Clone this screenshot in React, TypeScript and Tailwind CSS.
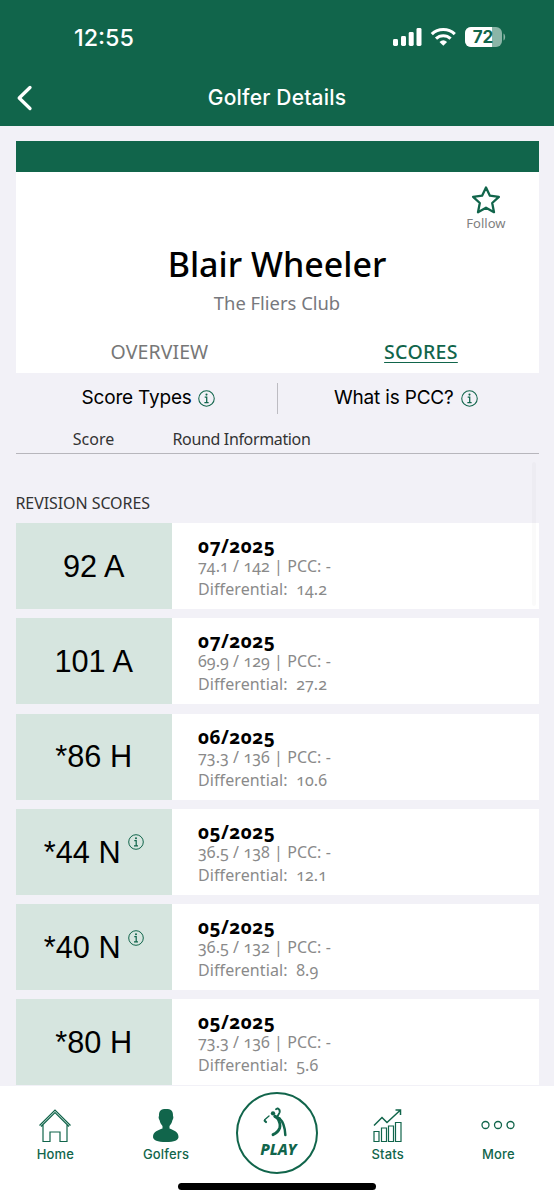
import React from "react";

const rows = [
  { score: "92 A", date: "07/2025", course: "74.1 / 142 | PCC: -", diff: "14.2", info: false },
  { score: "101 A", date: "07/2025", course: "69.9 / 129 | PCC: -", diff: "27.2", info: false },
  { score: "*86 H", date: "06/2025", course: "73.3 / 136 | PCC: -", diff: "10.6", info: false },
  { score: "*44 N", date: "05/2025", course: "36.5 / 138 | PCC: -", diff: "12.1", info: true },
  { score: "*40 N", date: "05/2025", course: "36.5 / 132 | PCC: -", diff: "8.9", info: true },
  { score: "*80 H", date: "05/2025", course: "73.3 / 136 | PCC: -", diff: "5.6", info: false },
];

function Info({ className }: { className: string }) {
  return (
    <svg viewBox="0 0 16 16" className={className} fill="none" stroke="#11654b">
      <circle cx="8" cy="8" r="7.3" strokeWidth="1" />
      <circle cx="8" cy="4.3" r="1" fill="#11654b" stroke="none" />
      <path d="M6.3 6.700h1.900v5M6 11.800h4" strokeWidth="1.200" />
    </svg>
  );
}

function StatusIcons() {
  return (
    <svg viewBox="0 0 114 22" className="mt-[26px] h-[22px] w-[114px]">
      <g fill="#fff">
        <rect x="1" y="13" width="5" height="7" rx="1.4" />
        <rect x="9" y="10" width="5" height="10" rx="1.4" />
        <rect x="16.7" y="6" width="5" height="14" rx="1.4" />
        <rect x="24.5" y="2" width="5" height="18" rx="1.4" />
        <path d="M51.3 19.8l-3.800-3.800a5.700 5.700 0 0 1 7.600 0z" />
      </g>
      <g fill="none" stroke="#fff" strokeWidth="3.1">
        <path d="M39.8 8.2a16.6 16.6 0 0 1 23 0" />
        <path d="M44 12.7a10.6 10.6 0 0 1 14.6 0" />
      </g>
      <path d="M79 1h25a6 6 0 0 1 6 6v8a6 6 0 0 1-6 6H79a6 6 0 0 1-6-6V7a6 6 0 0 1 6-6z" fill="#8bb5a7" />
      <path d="M79 1h21v20H79a6 6 0 0 1-6-6V7a6 6 0 0 1 6-6z" fill="#fff" />
      <path d="M111.5 7.5c2.2 1.2 2.2 5.8 0 7z" fill="#8bb5a7" />
      <text x="91" y="17.2" textAnchor="middle" fontFamily="Inter" fontWeight="700" fontSize="17" fill="#11654b">72</text>
    </svg>
  );
}

function NavItem({ label, children }: { label: string; children: React.ReactNode }) {
  return (
    <div className="flex w-[110.700px] flex-col items-center pt-[20px]">
      <div className="flex h-[38px] items-center justify-center">{children}</div>
      <span className="mt-[1px] font-['Inter'] text-[13px] leading-[18px] font-medium tracking-[0.15px]">{label}</span>
    </div>
  );
}

export default function App() {
  return (
    <div className="flex h-[1200px] w-[554px] flex-col overflow-hidden bg-[#f2f1f7] font-['Noto_Sans',sans-serif]">
      <header className="h-[125.500px] shrink-0 bg-[#11654b] text-white">
        <div className="flex h-[70px] items-start justify-between pr-[48px] pl-[74px]">
          <span className="mt-[22px] font-['Inter'] text-[23.300px] leading-[32px] font-medium">12:55</span>
          <StatusIcons />
        </div>
        <div className="flex h-[55px] items-center px-4">
          <svg viewBox="0 0 18 28" className="h-[28px] w-[18px]" fill="none" stroke="currentColor" strokeWidth="3.300" strokeLinecap="round" strokeLinejoin="round">
            <path d="M14 3.500L3.200 14 14 24.500" />
          </svg>
          <h1 className="mr-[18px] flex-1 text-center font-['Inter'] text-[21px] leading-[28px] font-medium tracking-[0.200px]">Golfer Details</h1>
        </div>
      </header>

      <section className="mx-[15.500px] mt-[15.500px] h-[232px] shrink-0 bg-white">
        <div className="h-[31px] bg-[#11654b]" />
        <div className="flex h-[67px] justify-end pr-[33px]">
          <div className="flex flex-col items-center pt-[13px]">
            <svg viewBox="0 0 30 30" className="h-[30px] w-[30px]" fill="none" stroke="#11654b" strokeWidth="2.300" strokeLinejoin="round">
              <path d="M15 2.500l3.900 8.200 9 1.100-6.700 6.200 1.800 9.200-8-4.500-8 4.500 1.800-9.200-6.700-6.200 9-1.100z" />
            </svg>
            <span className="text-[13px] leading-[16px] text-[#808080]">Follow</span>
          </div>
        </div>
        <h2 className="h-[50px] text-center text-[34px] leading-[50px] font-medium text-black">Blair Wheeler</h2>
        <p className="h-[28px] text-center text-[18.400px] leading-[28px] text-[#77787d]">The Fliers Club</p>
        <div className="flex pt-[23px] leading-[24px]">
          <span className="w-[289px] text-center text-[19.500px] tracking-[0.1px] text-[#777]">OVERVIEW</span>
          <span className="w-[236px] text-center text-[19.500px] font-medium tracking-[0.3px] text-[#11654b] underline underline-offset-[3px]">SCORES</span>
        </div>
      </section>

      <section className="mx-[15.500px] flex h-[51px] shrink-0 items-center font-['Inter'] text-[19px] tracking-[-0.180px] text-black">
        <div className="flex w-[261px] items-center gap-[6px] pl-[66px]">
          <span>Score Types</span><Info className="h-[17px] w-[17px]" />
        </div>
        <div className="h-[31px] w-px bg-[#bdbcc2]" />
        <div className="flex items-center gap-[7px] pl-[56.500px]">
          <span>What is PCC?</span><Info className="h-[17px] w-[17px]" />
        </div>
      </section>

      <div className="mx-[15.500px] flex h-[30px] shrink-0 items-center border-b border-[#b7b6bc] text-[16px] text-[#333]">
        <span className="w-[156px] text-center">Score</span>
        <span className="pl-[1px] tracking-[-0.350px]">Round Information</span>
      </div>

      <main className="relative min-h-0 flex-1 overflow-hidden px-[15.500px]">
        <div className="flex h-[69px] items-end pb-[8px] text-[16px] leading-[24px] tracking-[-0.080px] text-[#333]">REVISION SCORES</div>
        <div className="flex flex-col gap-[9.250px]">
          {rows.map((r, i) => (
            <article key={i} className="flex h-[86px] shrink-0 bg-white">
              <div className="flex w-[156.500px] items-center justify-center bg-[#d6e5df] pt-[2px] font-['Liberation_Sans',sans-serif] text-[30.700px] text-black">
                <span>{r.score}</span>
                {r.info && <Info className="mb-[21px] ml-[7px] h-[16px] w-[16px]" />}
              </div>
              <div className="pt-[13px] pl-[26px] text-[#8a8a8a] oldstyle-nums">
                <div className="text-[19px] leading-[20px] font-bold tracking-[0.400px] text-black">{r.date}</div>
                <div className="mt-[1px] text-[16px] leading-[19px] tracking-[0.080px]">{r.course}</div>
                <div className="mt-[3px] text-[16px] leading-[21px] tracking-[0.100px] whitespace-pre">{"Differential:  " + r.diff}</div>
              </div>
            </article>
          ))}
        </div>
        <div className="absolute top-[8px] right-[18px] h-[144px] w-[4px] rounded-full bg-black/[0.02]" />
      </main>

      <nav className="relative flex h-[114px] shrink-0 bg-white text-[#11654b]">
        <NavItem label="Home">
          <svg viewBox="0 0 34 36" className="h-[36px] w-[34px]" fill="none" stroke="currentColor" strokeWidth="1.200">
            <path d="M1.500 18.500L17 3l15.500 15.500M3 19.500L17 5.500l14 14M5 18v16.500h7V25h10v9.500h7V18" />
          </svg>
        </NavItem>
        <NavItem label="Golfers">
          <svg viewBox="0 0 28 34" className="h-[34px] w-[28px]" fill="currentColor">
            <path d="M14 1c5 0 7.300 1.800 7 7 .6.500.500 3-.6 4.200-.4 2.500-1.600 4.300-2.900 5.800v2.500c3.500 1.500 9 3 9 8.500 0 3-4 5-12.500 5S1 32 1 29c0-5.500 5.500-7 9.500-8.500V18c-1.300-1.500-2.500-3.300-2.900-5.800C6.500 11 6.400 8.500 7 8c-.3-5.200 2-7 7-7z" />
          </svg>
        </NavItem>
        <div className="flex w-[111px] justify-center pt-[6px]">
          <div className="flex h-[82px] w-[82px] flex-col items-center rounded-full border-[2.500px] border-[#11654b] pt-[12px]">
            <svg viewBox="129 78 78 96" className="mr-[2px] h-[32px] w-[26px] shrink-0" fill="none" stroke="currentColor" strokeLinecap="round" strokeLinejoin="round">
              <circle cx="159" cy="100" r="6.500" fill="currentColor" stroke="none" />
              <path d="M168 88l5-3c6 3 7 8 6 12l-6 11" strokeWidth="5.500" />
              <path d="M165 109l13 8" strokeWidth="10" />
              <path d="M173 115c7 12 9 19 6 29-3 9-11 16-20 20" strokeWidth="8.500" />
              <path d="M179 116c9 8 16 28 17 49" strokeWidth="7.500" />
              <path d="M147 108l-13 11" strokeWidth="4" />
              <path d="M134 122l4 4" strokeWidth="6.500" />
            </svg>
            <span className="mt-[1px] ml-[3px] text-[15.500px] leading-[20px] font-extrabold italic">PLAY</span>
          </div>
        </div>
        <NavItem label="Stats">
          <svg viewBox="0 0 32 36" className="h-[36px] w-[32px]" fill="none" stroke="currentColor" strokeWidth="1.200">
            <path d="M2 34.500v-10h5v10zM9.500 34.500v-13.500h5v13.500zM16.500 34.500v-15.500h5v15.500zM23.500 34.500v-19h5.500v19z" />
            <path d="M2 18.500l8-8 5 5L28.500 3M23.500 3h5v5" strokeWidth="1.500" />
          </svg>
        </NavItem>
        <NavItem label="More">
          <svg viewBox="0 0 34 10" className="h-[10px] w-[34px]" fill="none" stroke="currentColor" strokeWidth="1.300">
            <circle cx="4.500" cy="5" r="3.500" /><circle cx="17" cy="5" r="3.500" /><circle cx="29.500" cy="5" r="3.500" />
          </svg>
        </NavItem>
        <div className="absolute top-[97px] left-[178px] h-[7px] w-[198px] rounded-full bg-black" />
      </nav>
    </div>
  );
}
